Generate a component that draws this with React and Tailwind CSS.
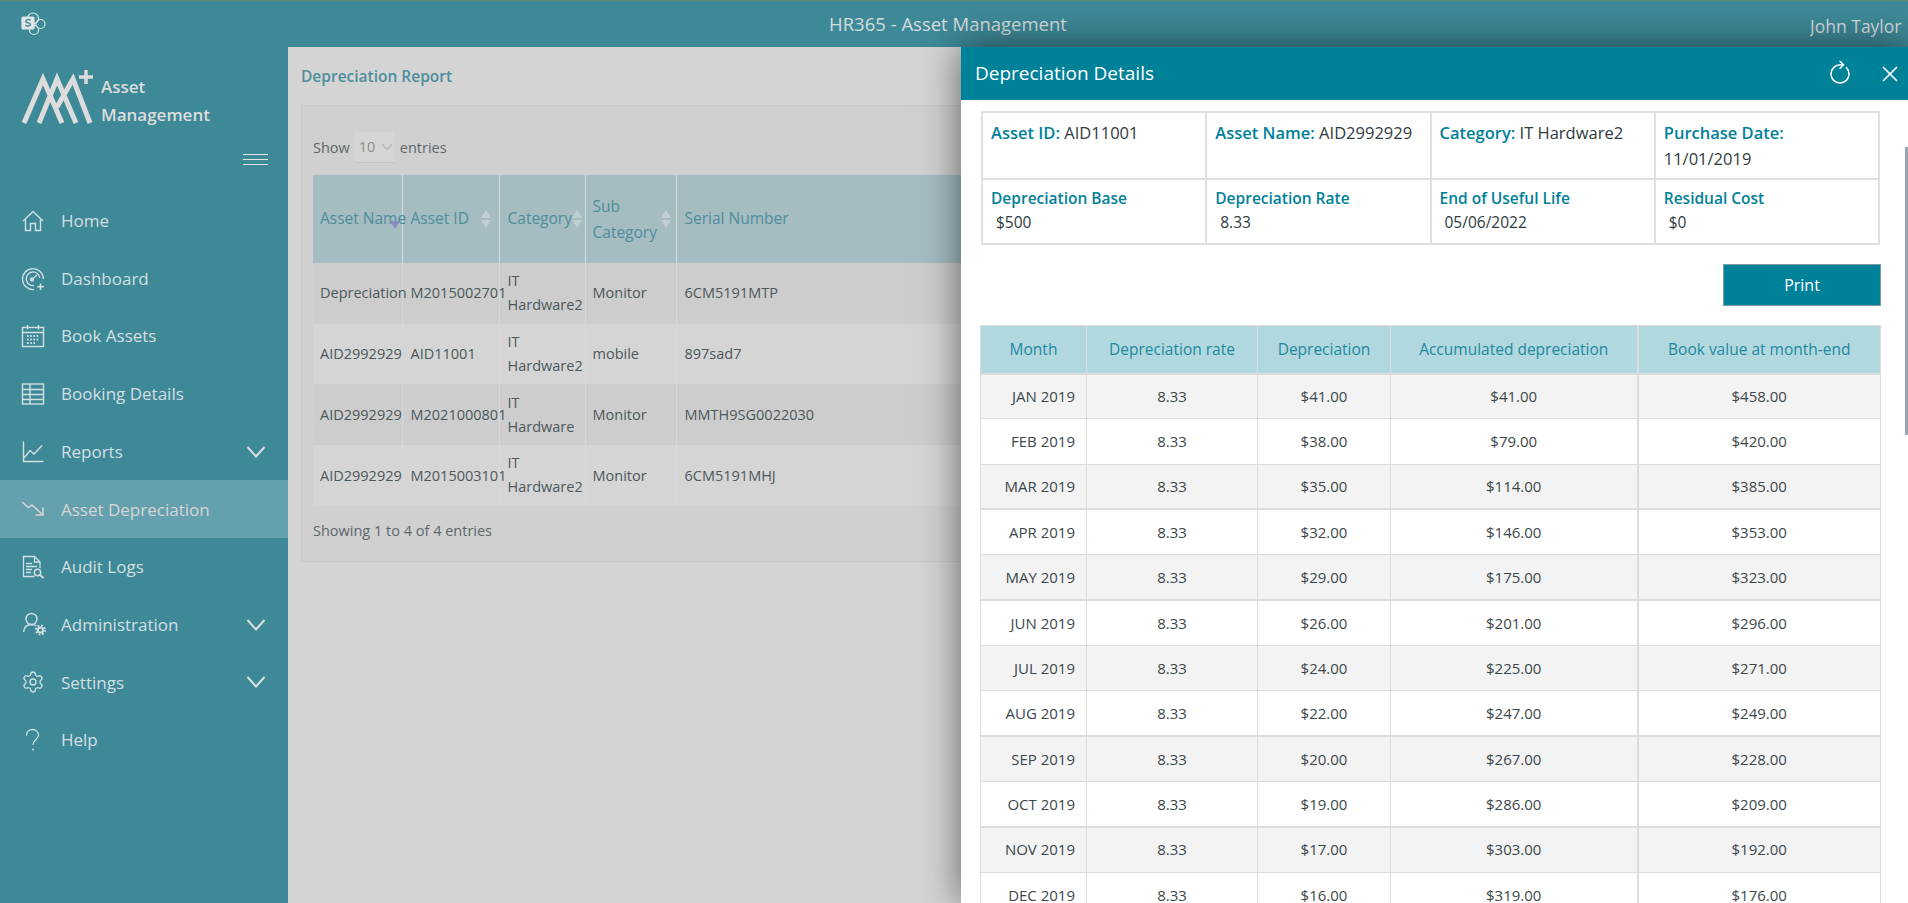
import { Settings, RotateCw, X } from "lucide-react";

const HomeIcon = () => (
    <svg width="24" height="24" viewBox="0 0 24 24" fill="none" stroke="currentColor" strokeWidth="1.4">
        <path d="M2 12 12 2.5 22 12M4.5 10.5V21.5H9.5V14.5H14.5V21.5H19.5V10.5" />
    </svg>
);

const DashIcon = () => (
    <svg width="24" height="24" viewBox="0 0 24 24" fill="none" stroke="currentColor" strokeWidth="1.3">
        <path d="M13 22.5A10.5 10.5 0 1 1 22.5 12" />
        <path d="M13 18.5A6.8 6.8 0 1 1 18.8 11" />
        <circle cx="11" cy="12.5" r="1.5" fill="currentColor" />
        <path d="M11.5 12 16 8" />
        <path d="M19.5 16.5V23M16.2 19.8H22.8" strokeWidth="1.6" />
    </svg>
);

const CalendarIcon = () => (
    <svg width="24" height="24" viewBox="0 0 24 24" fill="none" stroke="currentColor" strokeWidth="1.4">
        <rect x="1.5" y="3.5" width="21" height="19" />
        <path d="M1.5 8.5H22.5M6.5 1V5.5M17.5 1V5.5" />
        <path d="M6 12H18M6 15.5H18M6 19H15" strokeWidth="2" strokeDasharray="1.6 1.6" />
    </svg>
);

const TableIcon = () => (
    <svg width="24" height="24" viewBox="0 0 24 24" fill="none" stroke="currentColor" strokeWidth="1.4">
        <rect x="1.5" y="2" width="21" height="20" />
        <path d="M1.5 7.5H22.5M1.5 12.5H22.5M1.5 17.5H22.5M9 2V22" />
    </svg>
);

const ChartIcon = () => (
    <svg width="24" height="24" viewBox="0 0 24 24" fill="none" stroke="currentColor" strokeWidth="1.4">
        <path d="M2.5 1.5V21.5H22.5" />
        <path d="M3 18 9 10.5 13 14 21 5.5" />
    </svg>
);

const TrendDownIcon = () => (
    <svg width="24" height="24" viewBox="0 0 24 24" fill="none" stroke="currentColor" strokeWidth="1.5">
        <path d="M1 5 7.5 10.5 11 8 21 17" />
        <path d="M22 10.5V18H14.5" />
    </svg>
);

const AuditIcon = () => (
    <svg width="24" height="24" viewBox="0 0 24 24" fill="none" stroke="currentColor" strokeWidth="1.3">
        <path d="M13.5 21.5H2.5V1.5H13.5L19 7V13" />
        <path d="M13.5 1.5V7H19" />
        <path d="M5 8.5H11M5 11.5H16M5 14.5H11M5 17.5H10" strokeWidth="1.6" />
        <circle cx="16.5" cy="17.5" r="3.2" strokeWidth="1.5" />
        <path d="M19 20 22.5 23" strokeWidth="1.8" />
    </svg>
);

const AdminIcon = () => (
    <svg width="28" height="26" viewBox="0 0 28 26" fill="none" stroke="currentColor" strokeWidth="1.4">
        <circle cx="10.5" cy="7" r="5.5" />
        <path d="M2.5 20C3 15.5 6 12.5 10.5 12.5 12.5 12.5 14 13 15.5 14" />
        <circle cx="19.5" cy="18" r="2.6" strokeWidth="2" />
        <circle cx="19.5" cy="18" r="4.6" strokeWidth="1.8" strokeDasharray="1.8 1.8" />
    </svg>
);

const HelpIcon = () => (
    <svg width="24" height="24" viewBox="0 0 24 24" fill="none" stroke="currentColor" strokeWidth="1.3">
        <path d="M5.5 7.5C5.5 3.5 8.5 1.5 11.5 1.5 15 1.5 17.5 4 17.5 7 17.5 11.5 12 11.5 12 17" />
        <circle cx="12" cy="21.5" r="0.9" fill="currentColor" stroke="none" />
    </svg>
);

const Chevron = () => (
    <svg width="20" height="12" viewBox="0 0 20 12" fill="none" stroke="#dcdfdf" strokeWidth="2">
        <path d="M1.5 1 10 10.5 18.5 1" />
    </svg>
);

const navItems = [
    { name: "Home", icon: <HomeIcon /> },
    { name: "Dashboard", icon: <DashIcon /> },
    { name: "Book Assets", icon: <CalendarIcon /> },
    { name: "Booking Details", icon: <TableIcon /> },
    { name: "Reports", icon: <ChartIcon />, more: true },
    { name: "Asset Depreciation", icon: <TrendDownIcon />, active: true },
    { name: "Audit Logs", icon: <AuditIcon /> },
    { name: "Administration", icon: <AdminIcon />, more: true },
    { name: "Settings", icon: <Settings size={24} strokeWidth={1.3} />, more: true },
    { name: "Help", icon: <HelpIcon /> },
];

const assets = [
    ["Depreciation", "M2015002701", "IT Hardware2", "Monitor", "6CM5191MTP"],
    ["AID2992929", "AID11001", "IT Hardware2", "mobile", "897sad7"],
    ["AID2992929", "M2021000801", "IT Hardware", "Monitor", "MMTH9SG0022030"],
    ["AID2992929", "M2015003101", "IT Hardware2", "Monitor", "6CM5191MHJ"],
];

const months = [
    ["JAN 2019", "$41.00", "$41.00", "$458.00"],
    ["FEB 2019", "$38.00", "$79.00", "$420.00"],
    ["MAR 2019", "$35.00", "$114.00", "$385.00", true],
    ["APR 2019", "$32.00", "$146.00", "$353.00"],
    ["MAY 2019", "$29.00", "$175.00", "$323.00", true],
    ["JUN 2019", "$26.00", "$201.00", "$296.00"],
    ["JUL 2019", "$24.00", "$225.00", "$271.00"],
    ["AUG 2019", "$22.00", "$247.00", "$249.00", true],
    ["SEP 2019", "$20.00", "$267.00", "$228.00"],
    ["OCT 2019", "$19.00", "$286.00", "$209.00", true],
    ["NOV 2019", "$17.00", "$303.00", "$192.00"],
    ["DEC 2019", "$16.00", "$319.00", "$176.00"],
];

function SortArrows() {
    return (
        <span className="flex flex-col gap-[2px]">
            <span className="w-0 h-0 border-x-[5px] border-x-transparent border-b-[8px] border-b-[#c2cfd1]"></span>
            <span className="w-0 h-0 border-x-[5px] border-x-transparent border-t-[8px] border-t-[#c2cfd1]"></span>
        </span>
    );
}

function Sidebar() {
    return (
        <div className="w-[288px] shrink-0 bg-[#3e8998] text-[#d3dfe1]">
            <div className="h-[107px] flex items-start pl-[20px] pt-[22px] gap-[7px]">
                <svg width="74" height="56" viewBox="0 0 74 56" fill="none" stroke="#dcdcdc">
                    <path d="M4 54 23 10 42 54M19 54 37 10 56 54M37 38 53 10 70 54" strokeWidth="5" />
                    <path d="M66 1V15M59 8H73" strokeWidth="3.4" />
                </svg>
                <div className="text-[17px] font-semibold leading-[28px] text-[#dcdcdc] pt-[4px]">
                    <div>Asset</div>
                    <div>Management</div>
                </div>
            </div>
            <div className="flex flex-col items-end pr-[20px] gap-[4px] h-[38px]">
                <span className="w-[25px] h-px bg-[#e4e4e4]"></span>
                <span className="w-[25px] h-px bg-[#e4e4e4]"></span>
                <span className="w-[25px] h-px bg-[#e4e4e4]"></span>
            </div>
            <nav>
                {navItems.map((item) => (
                    <div
                        key={item.name}
                        className={`h-[57.7px] flex items-center pl-[21px] pr-[22px] text-[17px] ${item.active ? "bg-[#64a0ae] text-[#d6d6d6]" : ""}`}
                    >
                        <span className="w-[40px] flex">{item.icon}</span>
                        <span className="flex-1">{item.name}</span>
                        {item.more && <Chevron />}
                    </div>
                ))}
            </nav>
        </div>
    );
}

function AssetTable() {
    return (
        <table className="table-fixed border-collapse w-[1566px] text-[14.5px] text-[#4c585b]">
            <colgroup>
                <col className="w-[89px]" />
                <col className="w-[97px]" />
                <col className="w-[86px]" />
                <col className="w-[91px]" />
                <col className="w-[300px]" />
                <col />
            </colgroup>
            <thead>
                <tr className="h-[88px] bg-[#a5bcc0] text-[#4d8e9c] text-[15.5px] text-left">
                    <th className="font-normal pl-[7px] border-r border-[#d6dcdd] relative whitespace-nowrap">
                        Asset Name
                        <span className="absolute right-[2px] top-[46px] w-0 h-0 border-x-[5px] border-x-transparent border-t-[8px] border-t-[#8c8cc0]"></span>
                    </th>
                    <th className="font-normal pl-[8px] border-r border-[#d6dcdd]">
                        <span className="flex items-center justify-between pr-[8px]">Asset ID <SortArrows /></span>
                    </th>
                    <th className="font-normal pl-[8px] border-r border-[#d6dcdd]">
                        <span className="flex items-center justify-between pr-[5px]">Category <SortArrows /></span>
                    </th>
                    <th className="font-normal pl-[7px] border-r border-[#d6dcdd] leading-[26px]">
                        <span className="flex items-center justify-between pr-[5px]">
                            <span>Sub<br />Category</span>
                            <SortArrows />
                        </span>
                    </th>
                    <th className="font-normal pl-[8px]">Serial Number</th>
                    <th></th>
                </tr>
            </thead>
            <tbody>
                {assets.map((row, i) => (
                    <tr key={i} className={`h-[60.7px] ${i % 2 === 0 ? "bg-[#cdcdcd]" : "bg-[#d5d5d5]"}`}>
                        <td className="pl-[7px] border-r border-[#d8d8d8]">{row[0]}</td>
                        <td className="pl-[8px] border-r border-[#d8d8d8]">{row[1]}</td>
                        <td className="pl-[8px] border-r border-[#d8d8d8] leading-[24px]">{row[2]}</td>
                        <td className="pl-[7px] border-r border-[#d8d8d8]">{row[3]}</td>
                        <td className="pl-[8px] whitespace-nowrap">{row[4]}</td>
                        <td></td>
                    </tr>
                ))}
            </tbody>
        </table>
    );
}

function Summary({ label, value }) {
    return (
        <td className="align-top border-2 border-[#e0e0e0] pl-[8px] pt-[7px] pr-[8px] text-[16.5px] leading-[26px] text-[#2f3b40]">
            <b className="font-semibold text-[#00819a]">{label}</b> {value}
        </td>
    );
}

function Stat({ label, value }) {
    return (
        <td className="align-top border-2 border-[#e0e0e0] pl-[8px] pt-[6px] text-[#2f3b40]">
            <div className="font-semibold text-[#00819a] text-[15.5px] leading-[24px]">{label}</div>
            <div className="pl-[5px] text-[15.5px] leading-[24px]">{value}</div>
        </td>
    );
}

function DetailsPanel() {
    return (
        <div className="absolute right-0 top-[47px] bottom-0 w-[947px] bg-white shadow-[0_0_36px_rgba(0,0,0,0.55)] overflow-hidden">
            <div className="h-[53px] bg-[#00819a] flex items-center justify-between text-white pl-[14px] pr-[5px]">
                <span className="text-[19px]">Depreciation Details</span>
                <span className="flex items-center gap-[25px]">
                    <RotateCw size={24} strokeWidth={1.5} className="-rotate-45" />
                    <X size={26} strokeWidth={1.6} />
                </span>
            </div>
            <div className="pl-[19px] pr-[27px] pt-[11px]">
                <div className="px-px">
                    <table className="table-fixed border-collapse w-full">
                        <tbody>
                            <tr className="h-[67px]">
                                <Summary label="Asset ID:" value="AID11001" />
                                <Summary label="Asset Name:" value="AID2992929" />
                                <Summary label="Category:" value="IT Hardware2" />
                                <Summary label="Purchase Date:" value="11/01/2019" />
                            </tr>
                            <tr className="h-[65px]">
                                <Stat label="Depreciation Base" value="$500" />
                                <Stat label="Depreciation Rate" value="8.33" />
                                <Stat label="End of Useful Life" value="05/06/2022" />
                                <Stat label="Residual Cost" value="$0" />
                            </tr>
                        </tbody>
                    </table>
                </div>
                <div className="flex justify-end mt-[19px] mb-[19px]">
                    <button className="w-[158px] h-[42px] bg-[#00819a] border border-[#7d9aa2] text-white text-[16px]">Print</button>
                </div>
                <table className="table-fixed border-collapse w-[901px] text-[15px] text-[#3c474b]">
                    <colgroup>
                        <col className="w-[106px]" />
                        <col className="w-[171px]" />
                        <col className="w-[133px]" />
                        <col className="w-[247px]" />
                        <col />
                    </colgroup>
                    <thead>
                        <tr className="h-[48px] bg-[#b2d8df] text-[#1d8a9f] text-[15.5px]">
                            <th className="font-normal border border-b-2 border-[#dcdcdc]">Month</th>
                            <th className="font-normal border border-b-2 border-[#dcdcdc]">Depreciation rate</th>
                            <th className="font-normal border border-b-2 border-[#dcdcdc]">Depreciation</th>
                            <th className="font-normal border border-b-2 border-[#dcdcdc]">Accumulated depreciation</th>
                            <th className="font-normal border border-b-2 border-l-2 border-[#dcdcdc]">Book value at month-end</th>
                        </tr>
                    </thead>
                    <tbody>
                        {months.map((m, i) => (
                            <tr key={m[0]} className={`h-[45.33px] ${i % 2 === 0 ? "bg-[#f3f3f3]" : "bg-white"}`}>
                                <td className={`border border-[#dcdcdc] text-right pr-[11px] ${m[4] ? "border-b-2" : ""}`}>{m[0]}</td>
                                <td className={`border border-[#dcdcdc] text-center ${m[4] ? "border-b-2" : ""}`}>8.33</td>
                                <td className={`border border-[#dcdcdc] text-center ${m[4] ? "border-b-2" : ""}`}>{m[1]}</td>
                                <td className={`border border-[#dcdcdc] text-center ${m[4] ? "border-b-2" : ""}`}>{m[2]}</td>
                                <td className={`border border-l-2 border-[#dcdcdc] text-center ${m[4] ? "border-b-2" : ""}`}>{m[3]}</td>
                            </tr>
                        ))}
                    </tbody>
                </table>
            </div>
            <div className="absolute right-0 top-[100px] w-[3px] h-[288px] bg-[#9aa5ad]"></div>
        </div>
    );
}

function App() {
    return (
        <div className="relative h-screen overflow-hidden bg-[#d4d4d4] font-['Open_Sans',sans-serif]">
            <div className="h-[47px] bg-[#3e8998] border-t border-[#5f8a6a] grid grid-cols-[1fr_auto_1fr] items-center text-[#d4dcdd]">
                <span className="pl-[21px]">
                    <svg width="26" height="24" viewBox="0 0 26 24" fill="none" stroke="#dfe6e7" strokeWidth="1.2">
                        <circle cx="12" cy="6.5" r="5.5" />
                        <circle cx="19.5" cy="12" r="4.5" />
                        <circle cx="13" cy="18" r="4.5" />
                        <rect x="1" y="5" width="12" height="12" rx="1" fill="#dfe6e7" />
                        <path d="M9.5 8C8 7 4.5 7.5 4.8 9.3 5 11 9.5 10.7 9.5 12.5 9.5 14.2 5.5 14.5 4.3 13.3" stroke="#3e8998" strokeWidth="1.4" />
                    </svg>
                </span>
                <span className="text-[18.5px] pr-[12px]">HR365 - Asset Management</span>
                <span className="flex justify-end pt-[4px]">
                    <span className="w-[98px] overflow-hidden whitespace-nowrap text-[17.5px]">John Taylor</span>
                </span>
            </div>
            <div className="flex h-[856px]">
                <Sidebar />
                <main className="flex-1 min-w-0 pl-[13px] pr-[18px] pt-[18px]">
                    <h2 className="text-[15.5px] font-semibold text-[#4d8e9c] leading-[22px]">Depreciation Report</h2>
                    <div className="mt-[18px] h-[457px] bg-[#d0d0d0] border border-[#c9c9c9] pl-[11px] pt-[26px]">
                        <div className="flex items-center h-[31px] gap-[5px] text-[14.5px] text-[#5c686b] mb-[12px]">
                            <span>Show</span>
                            <span className="w-[40px] h-[31px] bg-[#d5d5d5] border-b border-[#c4c4c4] flex items-center justify-between pl-[4px] pr-[2px] text-[#8f8f84]">
                                10
                                <svg width="12" height="8" viewBox="0 0 12 8" fill="none" stroke="#b4b4b4" strokeWidth="1.2"><path d="M1 1 6 6.5 11 1" /></svg>
                            </span>
                            <span>entries</span>
                        </div>
                        <AssetTable />
                        <div className="mt-[14px] text-[14.5px] text-[#5c686b]">Showing 1 to 4 of 4 entries</div>
                    </div>
                </main>
            </div>
            <DetailsPanel />
        </div>
    );
}

export default App;
